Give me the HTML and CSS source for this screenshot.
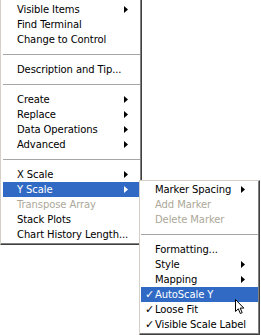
FILE: index.html
```html
<!DOCTYPE html>
<html>
<head>
<meta charset="utf-8">
<link rel="stylesheet" href="styles.css">
</head>
<body>
<div class="menu main">
  <div class="item"><span>Visible Items</span><svg class="arrow" width="4" height="7" viewBox="0 0 4 7"><polygon points="0,0 4,3.5 0,7"/></svg></div>
  <div class="item"><span>Find Terminal</span></div>
  <div class="item"><span>Change to Control</span></div>
  <div class="sep"></div>
  <div class="item"><span>Description and Tip...</span></div>
  <div class="sep"></div>
  <div class="item"><span>Create</span><svg class="arrow" width="4" height="7" viewBox="0 0 4 7"><polygon points="0,0 4,3.5 0,7"/></svg></div>
  <div class="item"><span>Replace</span><svg class="arrow" width="4" height="7" viewBox="0 0 4 7"><polygon points="0,0 4,3.5 0,7"/></svg></div>
  <div class="item"><span>Data Operations</span><svg class="arrow" width="4" height="7" viewBox="0 0 4 7"><polygon points="0,0 4,3.5 0,7"/></svg></div>
  <div class="item"><span>Advanced</span><svg class="arrow" width="4" height="7" viewBox="0 0 4 7"><polygon points="0,0 4,3.5 0,7"/></svg></div>
  <div class="sep"></div>
  <div class="item"><span>X Scale</span><svg class="arrow" width="4" height="7" viewBox="0 0 4 7"><polygon points="0,0 4,3.5 0,7"/></svg></div>
  <div class="item active"><span>Y Scale</span><svg class="arrow" width="4" height="7" viewBox="0 0 4 7"><polygon points="0,0 4,3.5 0,7"/></svg></div>
  <div class="item disabled"><span>Transpose Array</span></div>
  <div class="item"><span>Stack Plots</span></div>
  <div class="item"><span>Chart History Length...</span></div>
</div>

<div class="menu sub">
  <div class="item"><span>Marker Spacing</span><svg class="arrow" width="4" height="7" viewBox="0 0 4 7"><polygon points="0,0 4,3.5 0,7"/></svg></div>
  <div class="item disabled"><span>Add Marker</span></div>
  <div class="item disabled"><span>Delete Marker</span></div>
  <div class="sep"></div>
  <div class="item"><span>Formatting...</span></div>
  <div class="item"><span>Style</span><svg class="arrow" width="4" height="7" viewBox="0 0 4 7"><polygon points="0,0 4,3.5 0,7"/></svg></div>
  <div class="item"><span>Mapping</span><svg class="arrow" width="4" height="7" viewBox="0 0 4 7"><polygon points="0,0 4,3.5 0,7"/></svg></div>
  <div class="item active"><span class="label"><span class="check">✓</span>AutoScale Y</span></div>
  <div class="item"><span class="label"><span class="check">✓</span>Loose Fit</span></div>
  <div class="item"><span class="label"><span class="check">✓</span>Visible Scale Label</span></div>
</div>

<svg class="cursor" width="10" height="16" viewBox="0 0 10 16">
  <path d="M0.5,0.5 L0.5,12.5 L3.3,9.8 L5.3,14.5 L7.2,13.7 L5.2,9.1 L8.8,9.1 Z" fill="#fff" stroke="#000" stroke-width="1"/>
</svg>
</body>
</html>
```

FILE: styles.css
```css
html, body {
  margin: 0;
  padding: 0;
  background: #ffffff;
}

body {
  width: 261px;
  height: 335px;
  overflow: hidden;
  position: relative;
  font-family: "DejaVu Sans", Verdana, sans-serif;
  font-size: 10px;
  letter-spacing: -0.1px;
  color: #000;
}

.menu {
  background: #ffffff;
  display: flex;
  flex-direction: column;
  box-sizing: border-box;
}

.main {
  width: 142px;
  padding: 2px 1px 2px 2px;
  border-left: 1px solid #d4d0c8;
  border-right: 1px solid #404040;
  border-bottom: 1px solid #404040;
  box-shadow: inset -1px -1px 0 #808080;
}

.sub {
  position: absolute;
  left: 139px;
  top: 180px;
  width: 121px;
  height: 155px;
  padding: 1px;
  border: 1px solid;
  border-color: #d4d0c8 #404040 #404040 #d4d0c8;
  box-shadow: inset -1px -1px 0 #808080;
}

.item {
  height: 15px;
  display: flex;
  align-items: center;
  justify-content: space-between;
  padding: 0 12px 0 14px;
  white-space: nowrap;
}

.sub .item {
  padding-right: 13px;
}

.item .arrow {
  fill: #000;
  flex: none;
}

.item.active {
  background: #316ac5;
  color: #ffffff;
}

.item.active .arrow {
  fill: #ffffff;
}

.item.disabled {
  color: #aca899;
}

.label {
  display: flex;
  align-items: center;
}

.check {
  width: 10px;
  margin-left: -10px;
  font-size: 11px;
}

.sep {
  height: 15px;
  display: flex;
  align-items: center;
}

.sep::before {
  content: "";
  display: block;
  width: 100%;
  height: 1px;
  background: #a6a6a6;
}

.cursor {
  position: absolute;
  left: 235px;
  top: 299px;
}
```
